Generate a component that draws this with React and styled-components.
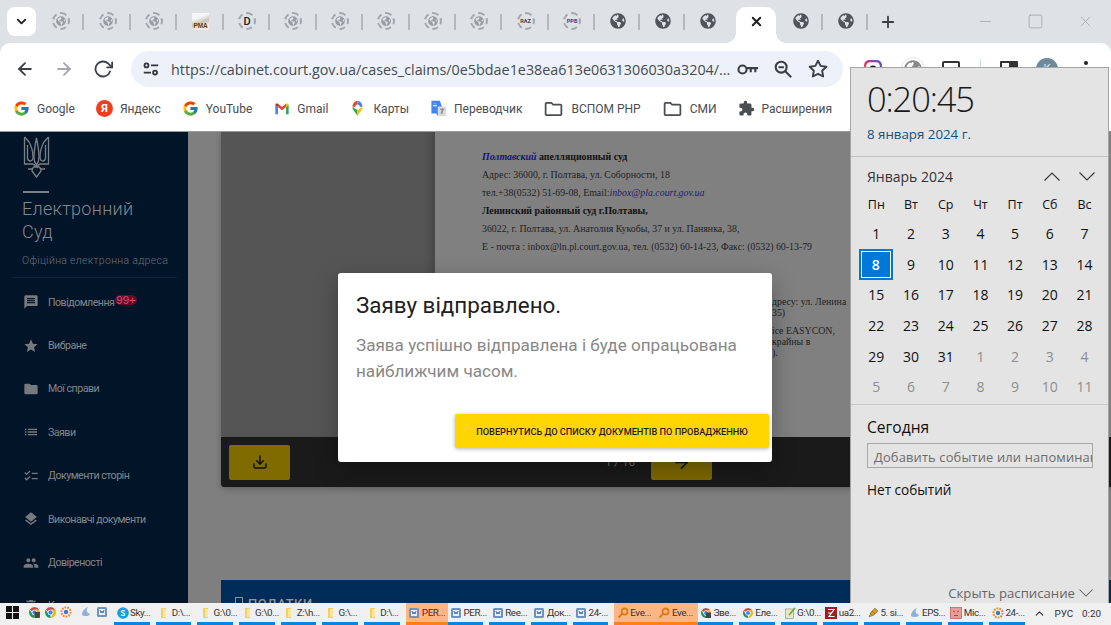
import React from "react";
import styled, { createGlobalStyle } from "styled-components";
import { FaGlobeAmericas } from "react-icons/fa";
import { FcGoogle } from "react-icons/fc";
import { MdMessage, MdStar, MdFolder, MdList, MdChecklist, MdLayers, MdPeople, MdDelete, MdExtension, MdOutlineFolder } from "react-icons/md";
import { FiArrowLeft, FiArrowRight, FiRotateCw, FiStar, FiMinus, FiPlus, FiX, FiChevronDown, FiChevronUp, FiSquare, FiDownload } from "react-icons/fi";

const Global = createGlobalStyle`
  html, body { margin: 0; padding: 0; width: 1111px; height: 625px; overflow: hidden; background: #fff; }
  * { box-sizing: border-box; }
`;

const Screen = styled.div`
  position: relative; width: 1111px; height: 625px; overflow: hidden; background: #dee1e6;
  display: flex; flex-direction: column; font-family: "Open Sans", "Liberation Sans", sans-serif;
`;

/* ---------- tab strip ---------- */
const TabStrip = styled.div`
  height: 43px; flex: none; background: #dee1e6; display: flex; align-items: stretch; padding-left: 7px;
`;
const TabMenu = styled.div`
  width: 29px; height: 29px; margin-top: 7px; margin-right: 2px; background: #fff; border-radius: 8px;
  display: flex; align-items: center; justify-content: center; color: #1f1f1f; font-size: 15px;
  svg { stroke-width: 3; }
`;
const Tab = styled.div`
  position: relative; width: ${p => p.$w || 46.45}px; display: flex; align-items: center; justify-content: center; padding-bottom: 1px; color: #52565c;
  &::after {
    content: ""; position: absolute; right: 0; top: 14px; height: 16px; width: 2px;
    background: ${p => (p.$sep ? "#b5b8bd" : "transparent")};
  }
`;
const ActiveTab = styled.div`
  position: relative; width: 40px; margin: 7px 2px 0 6px; background: #fff; border-radius: 10px 10px 0 0;
  display: flex; align-items: center; justify-content: center; padding-bottom: 7px; color: #1f1f1f; font-size: 15px;
  svg { stroke-width: 3; }
  &::before, &::after {
    content: ""; position: absolute; bottom: 0; width: 10px; height: 10px;
    background: radial-gradient(circle at var(--c) 0, #dee1e6 9.5px, #fff 10px);
  }
  &::before { left: -10px; --c: 0; }
  &::after { right: -10px; --c: 100%; }
`;
const NewTab = styled.div`
  margin-left: 3px; width: 34px; display: flex; align-items: center; justify-content: center; color: #3c4043; font-size: 18px;
  svg { stroke-width: 2.4; }
`;
const WindowControls = styled.div`
  margin-left: auto; display: flex; align-items: center; color: #a3a6ab; font-size: 17px; padding-right: 0;
`;
const WinButton = styled.div`
  width: 50px; display: flex; justify-content: center; margin-right: ${p => p.$mr || 0}px;
  svg { stroke-width: 1.2; }
`;
const DashedIcon = styled.span`
  position: relative; width: 18px; height: 18px; border-radius: 50%; border: 2px dashed #a3a7ad;
  display: flex; align-items: center; justify-content: center;
  font: ${p => p.$big ? "500 11px" : "700 5.6px"} "Roboto", sans-serif; color: ${p => p.$color || "#333"};
`;
const InnerGlobe = styled(FaGlobeAmericas)` color: #979ca2; font-size: 10px; `;
const DarkGlobe = styled(FaGlobeAmericas)` color: #50555b; font-size: 16px; `;
const PmaIcon = styled.span`
  width: 17px; height: 17px; background: linear-gradient(160deg, #f5f5f5 30%, #c9c4b8 55%, #f0ece2 75%); display: flex; align-items: flex-end; justify-content: center;
  font: 900 6.6px "Liberation Sans", sans-serif; color: #6b3f08; line-height: 8px; letter-spacing: -.2px;
`;

/* ---------- toolbar ---------- */
const Toolbar = styled.div`
  height: 45px; flex: none; background: #fff; display: flex; align-items: center; padding-top: 7px; border-radius: 10px 10px 0 0; margin-top: 0;
`;
const NavIcon = styled.div`
  width: 39px; display: flex; justify-content: center; font-size: 20px; color: ${p => p.$off ? "#a5a7aa" : "#3c3f43"};
  svg { stroke-width: 2.2; }
`;
const NavGroup = styled.div` display: flex; padding-left: 5px; width: 131px; flex: none; `;
const UrlBar = styled.div`
  width: 712px; height: 36px; flex: none; background: #edf2fa; border-radius: 18px; display: flex; align-items: center; padding: 0 8px 0 9px;
`;
const SiteChip = styled.div`
  width: 22px; height: 22px; margin-right: 9px; display: flex; align-items: center; justify-content: center; color: #33363a;
`;
const UrlText = styled.div`
  flex: 1; font-size: 14.35px; color: #474a4f; white-space: nowrap; overflow: hidden;
`;
const UrlAction = styled.div`
  width: 35px; display: flex; justify-content: center; font-size: 20px; color: #3c3f43;
  svg { stroke-width: 2.3; }
`;
const ExtTray = styled.div` display: flex; align-items: center; padding-left: 10px; `;
const ExtIcon = styled.div`
  width: ${p => p.$w || 38}px; display: flex; justify-content: center;
`;

/* ---------- bookmarks ---------- */
const Bookmarks = styled.div`
  height: 43px; flex: none; background: #fff; display: flex; align-items: center; padding-left: 13px; gap: 21px; padding-bottom: 2px;
`;
const Bookmark = styled.div`
  display: flex; align-items: center; gap: 7px; font: 400 12px "Roboto", sans-serif; color: #4a4d52; white-space: nowrap;
`;
const BookmarkGlyph = styled.span`
  width: ${p => p.$w || 17}px; height: 17px; display: flex; align-items: center; justify-content: center; font-size: ${p => p.$size || 17}px; color: #4a4d52; flex: none;
`;
const YandexDot = styled.span`
  width: 17px; height: 17px; border-radius: 50%; background: #f23d1e; color: #fff; font: 700 11px "Roboto", sans-serif;
  display: flex; align-items: center; justify-content: center;
`;

/* ---------- main ---------- */
const Main = styled.div`
  height: 472px; flex: none; display: flex; background: #7f7f7f; overflow: hidden; border-top: 1px solid #9a9a9a;
`;
const Sidebar = styled.aside`
  width: 188px; flex: none; background: #011428; display: flex; flex-direction: column; padding: 4px 0 0 23px; overflow: hidden;
`;
const Logo = styled.svg` width: 27px; height: 42px; flex: none; `;
const LogoRule = styled.div` width: 26px; height: 1.5px; background: #7c7f85; margin-top: 13px; flex: none; `;
const Brand = styled.div`
  margin: 4px 0 0 -1px; font: 300 18px/23px "Roboto", sans-serif; letter-spacing: .3px; color: #85888e; flex: none;
`;
const Tagline = styled.div`
  margin: 10px 0 0 -1px; font: 300 10.5px/16px "Roboto", sans-serif; letter-spacing: .3px; color: #6a6f76; white-space: nowrap; flex: none;
`;
const SideRule = styled.div`
  height: 1px; background: #0f2237; margin: 8px 11px 0 -11px; flex: none;
`;
const NavList = styled.nav`
  display: flex; flex-direction: column; margin-top: 3px; flex: none;
`;
const NavRow = styled.div`
  height: 43.4px; display: flex; align-items: center; gap: 9px; font: 400 10.6px "Roboto", "Liberation Sans", sans-serif; color: #85878b; white-space: nowrap; letter-spacing: -.5px; flex: none;
`;
const NavGlyph = styled.span`
  width: 16px; display: flex; justify-content: center; font-size: 18px; color: #76797e;
`;
const NavBadge = styled.span`
  position: relative; top: -2px; margin-left: -8px; padding: 0 1px; background: #620e2a; border-radius: 6px; color: #dc4a70; font: 500 11.5px/10px "Liberation Sans", sans-serif; letter-spacing: 0;
`;

const Content = styled.main`
  flex: 1; min-width: 0; display: flex; flex-direction: column; padding-left: 33px;
`;
const Viewer = styled.section`
  height: 355px; flex: none; display: flex; flex-direction: column; border-radius: 0 0 0 3px; overflow: hidden; box-shadow: 0 2px 6px rgba(0,0,0,.25);
`;
const ViewerBody = styled.div` flex: 1; min-height: 0; display: flex; `;
const Gutter = styled.div` width: 214px; flex: none; background: #555; box-shadow: inset -10px 0 10px -8px rgba(0,0,0,.25); `;
const Paper = styled.div`
  flex: 1; background: #808080; padding: 15.6px 0 0 47px; font: 400 9.85px/18px "Liberation Serif", serif; color: #222; white-space: nowrap; overflow: hidden;
`;
const DocLine = styled.div``;
const Strong = styled.b` color: #111; `;
const DocMail = styled.i` color: #23216b; `;
const DocRegion = styled.b` color: #15107f; font-style: italic; `;
const DocTail = styled.div`
  margin-left: ${p => p.$x}px; line-height: 11px; margin-top: ${p => p.$top || 0}px;
`;
const ViewerBar = styled.div`
  height: 50px; flex: none; background: #1a1a1a; display: flex; align-items: center; padding-left: 8px; position: relative;
`;
const BarButton = styled.div`
  width: 61px; height: 35px; background: #7f6b00; border-radius: 2px; display: flex; align-items: center; justify-content: center; color: #111; font-size: ${p => p.$fs || 16}px;
  margin-left: ${p => p.$ml || 0}px;
  svg { stroke-width: 2.2; }
`;
const PageNo = styled.div`
  margin-left: 315px; width: 30px; font: 400 11.5px "Roboto", sans-serif; color: #6f6f6f; white-space: nowrap;
`;
const Attachments = styled.section`
  margin-top: 93px; flex: 1; background: #002c5a; padding: 16px 0 0 14px; display: flex; gap: 5px; color: #8c95a3; font: 500 13px "Roboto", sans-serif; letter-spacing: .5px;
`;
const AttachGlyph = styled.span` width: 8px; height: 10px; margin-top: 1px; border: 1.5px solid #8c95a3; `;

/* ---------- modal ---------- */
const Modal = styled.div`
  position: absolute; left: 338px; top: 273px; width: 434px; height: 189px; background: #fff; border-radius: 3px;
  box-shadow: 0 8px 24px rgba(0,0,0,.3); display: flex; flex-direction: column; padding: 17px 3px 14px 18px; font-family: "Roboto", sans-serif;
`;
const ModalTitle = styled.h2` margin: 0; font: 400 22.4px/30px "Roboto", sans-serif; color: #212121; `;
const ModalBody = styled.p` margin: 12px 0 0; width: 400px; font: 400 17.1px/26px "Roboto", sans-serif; color: #888; `;
const ModalActions = styled.div` margin-top: auto; display: flex; justify-content: flex-end; `;
const ModalButton = styled.button`
  width: 314px; height: 34px; border: 0; border-radius: 2px; background: #ffd600; color: #1d1d1d; padding: 0;
  font: 500 9.2px "Roboto", "Liberation Sans", sans-serif; text-transform: uppercase; box-shadow: 0 1px 4px rgba(0,0,0,.3);
`;

/* ---------- calendar flyout ---------- */
const Flyout = styled.aside`
  position: absolute; left: 850px; top: 67px; width: 259px; height: 536px; background: #e4e4e4;
  border: 1px solid #a5a5a5; border-bottom: 0; display: flex; flex-direction: column; color: #111;
`;
const ClockBlock = styled.div`
  height: 89px; flex: none; padding: 8px 0 0 16px; border-bottom: 1px solid #c2c2c2;
`;
const Clock = styled.div` font: 300 34.5px/46px "Open Sans", sans-serif; color: #1a1a1a; letter-spacing: -1.15px; `;
const LongDate = styled.div` font: 400 13.3px/20px "Open Sans", sans-serif; color: #155184; margin-top: 2px; `;
const MonthSection = styled.div`
  height: 248px; flex: none; padding: 5px 0 0 8px; border-bottom: 1px solid #c9c9c9;
`;
const MonthRow = styled.div`
  height: 28px; display: flex; align-items: center; padding-left: 8px; font-size: 14px; color: #333;
`;
const MonthArrows = styled.div` margin-left: auto; display: flex; margin-right: 4px; `;
const MonthArrow = styled.span` width: 35px; display: flex; justify-content: center; `;
const Chevron = styled.svg`
  width: ${p => p.$w || 16}px; height: ${p => (p.$w || 16) / 2 + 1}px; fill: none; stroke: ${p => p.$c || "#3a3a3a"}; stroke-width: 1.2;
`;
const DayGrid = styled.div`
  display: grid; grid-template-columns: repeat(7, 34.7px); grid-template-rows: 27.4px; grid-auto-rows: 30.6px; margin-top: 1px;
`;
const DayCell = styled.div`
  display: flex; align-items: center; justify-content: center; font-size: ${p => p.$head ? 12.5 : 14}px;
  color: ${p => p.$muted ? "#8e8e8e" : "#111"};
`;
const SelectedDay = styled(DayCell)`
  margin: 0 1px 0 0; background: #0078d7; color: #fff; font-weight: 600; border: 2px solid #0078d7; box-shadow: inset 0 0 0 1px #fff;
`;
const Agenda = styled.div` flex: 1; display: flex; flex-direction: column; padding: 11px 0 0 16px; `;
const AgendaTitle = styled.div` font: 400 15.6px/22px "Open Sans", sans-serif; color: #111; `;
const AgendaInput = styled.div`
  margin-top: 5px; width: 226px; height: 25px; border: 1px solid #a8a8a8; padding-left: 6px; font-size: 12.9px; line-height: 26px;
  color: #6b6b6b; white-space: nowrap; overflow: hidden; letter-spacing: .15px;
`;
const AgendaEmpty = styled.div` margin-top: 12px; font-size: 13.6px; line-height: 20px; color: #111; `;
const HideSchedule = styled.div`
  margin-top: auto; align-self: flex-end; display: flex; align-items: center; gap: 4px; height: 20px; padding-right: 15px; font-size: 13.2px; color: #666;
`;

/* ---------- taskbar ---------- */
const Taskbar = styled.footer`
  height: 22px; flex: none; background: #f0f0f0; display: flex; align-items: stretch; font: 400 9.8px "Roboto", sans-serif; color: #333;
`;
const StartArea = styled.div` width: 114px; flex: none; display: flex; align-items: center; padding: 0 0 3px 6px; gap: 3px; `;
const TrayIcon = styled.span` width: 13px; height: 13px; margin-left: ${p => p.$ml || 0}px; display: flex; flex: none; `;
const TaskItem = styled.div`
  width: 41.7px; flex: none; display: flex; align-items: center; gap: 1.5px; padding: 0 0 3px 2.5px; overflow: hidden; white-space: nowrap; position: relative; letter-spacing: -.35px;
  background: ${p => p.$active ? "#ffb584" : "transparent"};
  &::after {
    content: ""; position: absolute; bottom: 0; left: 0; right: ${p => p.$active ? 0 : "6px"}; height: 3px; background: ${p => p.$active ? "#ff7e21" : "#0d84d8"};
  }
`;
const TaskGlyph = styled.span` width: 12px; height: 12px; flex: none; display: flex; `;
const Tray = styled.div`
  margin-left: auto; display: flex; align-items: center; padding: 0 10px 2px 0; gap: 9px; font-size: 9.8px; white-space: nowrap;
  svg { font-size: 13px; }
`;

/* ---------- drawings ---------- */
const Chrome = ({ size = 12, badge }) => (
  <svg viewBox="0 0 24 24" width={size} height={size}>
    <path fill="#db4437" d="M12 2a10 10 0 0 1 8.66 5H12a5 5 0 0 0-4.33 2.5L3.34 7A10 10 0 0 1 12 2z" />
    <path fill="#f4b400" d="M20.66 7A10 10 0 0 1 12 22l4.33-7.5A5 5 0 0 0 12 7z" />
    <path fill="#0f9d58" d="M12 22A10 10 0 0 1 3.34 7l4.33 7.5A5 5 0 0 0 12 17z" />
    <circle cx="12" cy="12" r="5" fill="#fff" />
    <circle cx="12" cy="12" r="4" fill="#4285f4" />
    {badge && <rect x="12" y="11" width="10" height="11" fill="#444" />}
  </svg>
);
const Win = () => (
  <svg viewBox="0 0 14 14" width="13" height="13"><path fill="#111" d="M0 0h6.4v6.4H0zM7.6 0H14v6.4H7.6zM0 7.6h6.4V14H0zM7.6 7.6H14V14H7.6z" /></svg>
);
const FolderT = () => (
  <svg viewBox="0 0 12 12" width="12" height="12"><path fill="#f5cf62" d="M3 1h5v10H3z" /><path fill="#fbe69c" d="M5 2h3v8H5z" /></svg>
);
const WordI = () => (
  <svg viewBox="0 0 12 12" width="12" height="12"><rect x="1" y="1" width="10" height="10" rx="1.5" fill="#6f92bf" /><rect x="3" y="3" width="6" height="6" fill="#e8eef6" /><path d="M4 4l1 3 1-2 1 2 1-3" stroke="#2b5797" fill="none" strokeWidth=".8" /></svg>
);
const KeyI = () => (
  <svg viewBox="0 0 12 12" width="12" height="12"><circle cx="7.5" cy="4.5" r="3" fill="none" stroke="#dc7a1c" strokeWidth="1.8" /><path d="M5.4 6.6L1.5 10.5" stroke="#dc7a1c" strokeWidth="2" /></svg>
);
const SkypeI = () => (
  <svg viewBox="0 0 12 12" width="12" height="12"><circle cx="6" cy="6" r="5.8" fill="#159fe2" /><path d="M8 4.2C7.4 3.4 4.4 3.3 4.3 4.6 4.2 6 8 5.6 7.9 7.4 7.8 8.8 4.6 8.6 4 7.7" stroke="#fff" fill="none" strokeWidth="1.1" /></svg>
);
const NoteI = () => (
  <svg viewBox="0 0 12 12" width="12" height="12"><rect x="1.5" y="2" width="8" height="9.5" fill="#e9e5c8" stroke="#8a8a70" strokeWidth=".6" /><path d="M5 8l6-7" stroke="#6aa52a" strokeWidth="1.6" /></svg>
);
const ZillaI = () => (
  <svg viewBox="0 0 12 12" width="12" height="12"><rect width="12" height="12" fill="#a51c1c" /><path d="M3 2.5h6L4 9.5h5.5M3 6h4" stroke="#fff" fill="none" strokeWidth="1.2" /></svg>
);
const PencilI = () => (
  <svg viewBox="0 0 12 12" width="12" height="12"><path d="M2 10l2-5 4-4 3 3-4 4z" fill="#d69a2a" stroke="#7c5a14" strokeWidth=".5" /><path d="M3 6l3 3M5 4l3 3" stroke="#7c5a14" strokeWidth=".5" /></svg>
);
const EpsI = () => (
  <svg viewBox="0 0 12 12" width="12" height="12"><path d="M2 9C2 5 5 2 8 1 6 4 6 6 10 8c0 2-6 3-8 1z" fill="#8fb1d9" /></svg>
);
const MicI = () => (
  <svg viewBox="0 0 12 12" width="12" height="12"><rect x=".5" y=".5" width="11" height="11" fill="#e79c9c" stroke="#b55" strokeWidth=".7" /><path d="M3 4l2 1m4-1L7 5M4 8.5h4" stroke="#a33" strokeWidth=".9" /></svg>
);
const GearI = () => (
  <svg viewBox="0 0 12 12" width="12" height="12"><circle cx="6" cy="6" r="4.6" fill="none" stroke="#e8893a" strokeWidth="2" strokeDasharray="1.8 1" /><circle cx="6" cy="6" r="2.2" fill="#4a78b4" /></svg>
);
const GMail = () => (
  <svg viewBox="0 0 24 24" width="16" height="16">
    <path fill="#4285f4" d="M2 20V6l4 3v11z" /><path fill="#34a853" d="M18 20V9l4-3v14z" />
    <path fill="#ea4335" d="M6 9v-5l6 5 6-5v5l-6 5z" /><path fill="#c5221f" d="M2 6c0-2 2-3 4-2v5z" /><path fill="#fbbc04" d="M22 6c0-2-2-3-4-2v5z" />
  </svg>
);
const MapPin = () => (
  <svg viewBox="0 0 24 24" width="17" height="17">
    <path fill="#34a853" d="M12 23c-1-4-7-8-7.2-13.5L12 14z" /><path fill="#fbbc04" d="M12 23c1-4 7-8 7.2-13.5L12 14z" />
    <path fill="#ea4335" d="M5 9.5C5 5 8 1.5 12 1.5V7a3 3 0 0 0-3 3z" /><path fill="#4285f4" d="M19 9.5C19 5 16 1.5 12 1.5V7a3 3 0 0 1 3 3z" />
    <circle cx="12" cy="9.5" r="3" fill="#fff" />
  </svg>
);
const Translate = () => (
  <svg viewBox="0 0 24 24" width="17" height="17">
    <path fill="#4285f4" d="M2 1h12l7 21H10l-1-3H2z" /><rect x="11" y="9" width="12" height="14" rx="1" fill="#dadce0" />
    <path d="M4 8h6M7 5v1" stroke="#fff" strokeWidth="1.5" /><path d="M14 13h6M17 12v8M15 19l4-5" stroke="#777" strokeWidth="1.2" fill="none" />
  </svg>
);
const Tune = () => (
  <svg viewBox="0 0 20 20" width="18" height="18" fill="none" stroke="#33363a" strokeWidth="2">
    <circle cx="5" cy="6" r="2.2" /><path d="M10 6h8M2 14h8" /><circle cx="14.5" cy="14" r="2.2" />
  </svg>
);
const KeyOutline = () => (
  <svg viewBox="0 0 24 12" width="22" height="11" fill="none" stroke="#3c3f43" strokeWidth="2">
    <circle cx="6" cy="6" r="4.4" /><path d="M10.5 4.5H23M15 4.5V9M20 4.5V9" />
  </svg>
);
const Zoom = () => (
  <svg viewBox="0 0 22 22" width="20" height="20" fill="none" stroke="#3c3f43" strokeWidth="2.2">
    <circle cx="9" cy="9" r="6" /><path d="M13.5 13.5L20 20M6 9h6" />
  </svg>
);
const Trident = () => (
  <Logo viewBox="0 0 27 42" fill="none" stroke="#7c7f85" strokeWidth="1.3">
    <path d="M1.5 1V28H9Q12 28 13 32" />
    <path d="M25.5 1V28H18Q15 28 14 32" />
    <path d="M1.5 1L6 6Q10 13 10 21Q10 25 7 25Q4.5 24.5 4.5 22V9" />
    <path d="M25.5 1L21 6Q17 13 17 21Q17 25 20 25Q22.5 24.5 22.5 22V9" />
    <path d="M13.5 2Q11 14 11 21Q11 26 13.5 29Q16 26 16 21Q16 14 13.5 2Z" />
    <path d="M13.5 41L9 35Q9 31 13.5 30Q18 31 18 35Z" />
    <path d="M5 33H9M18 33H22" />
  </Logo>
);
const InstaRing = () => (
  <svg viewBox="0 0 18 18" width="18" height="18"><rect x="1" y="1" width="16" height="16" rx="5" fill="none" stroke="url(#ig)" strokeWidth="2.4" /><defs><linearGradient id="ig" x1="0" y1="1" x2="1" y2="0"><stop offset="0" stopColor="#f58529" /><stop offset=".5" stopColor="#dd2a7b" /><stop offset="1" stopColor="#515bd4" /></linearGradient></defs><circle cx="9" cy="9" r="3.6" fill="#222" /></svg>
);
const ChevronDownThin = ({ w, c }) => (
  <Chevron viewBox="0 0 16 9" $w={w} $c={c}><path d="M.5.5L8 8l7.5-7.5" /></Chevron>
);
const ChevronUpThin = ({ w, c }) => (
  <Chevron viewBox="0 0 16 9" $w={w} $c={c}><path d="M.5 8.5L8 1l7.5 7.5" /></Chevron>
);
const Avatar = styled.span`
  width: 22px; height: 22px; border-radius: 50%; background: #6f8a99; color: #dfe7ea; font: 400 11px/22px "Roboto", sans-serif; text-align: center;
`;
const Dots = styled.span`
  width: 4px; height: 4px; border-radius: 50%; background: #222; box-shadow: 0 6px 0 #222, 0 -6px 0 #222;
`;
const PuzzleBox = styled.span`
  width: 18px; height: 18px; border: 2px solid #333; border-radius: 2px; margin-top: 2px;
`;
const PanelBox = styled.span`
  width: 18px; height: 16px; border: 2px solid #333; background: linear-gradient(90deg, #fff 50%, #333 50%); border-radius: 1px;
`;
const Divider = styled.span` width: 1px; height: 20px; background: #c7dcec; `;
const GlobeChip = styled.span`
  width: 24px; height: 24px; border-radius: 50%; border: 1px solid #e6e6e6; display: flex; align-items: center; justify-content: center; color: #888; font-size: 18px;
`;

/* ---------- data ---------- */
const dashed = k => <DashedIcon key={k}><InnerGlobe /></DashedIcon>;
const tabs = [
  { i: dashed(1), s: 1 }, { i: dashed(2), s: 1 }, { i: dashed(3), s: 1 },
  { i: <PmaIcon>PMA</PmaIcon>, s: 1 },
  { i: <DashedIcon $big $color="#222">D</DashedIcon>, s: 1 },
  { i: dashed(4), s: 1 }, { i: dashed(5), s: 1 }, { i: dashed(6), s: 1 }, { i: dashed(7), s: 1 }, { i: dashed(8), s: 1 },
  { i: <DashedIcon $color="#444">RAZ</DashedIcon>, s: 1 },
  { i: <DashedIcon $color="#3a3c8f">PPБ</DashedIcon>, s: 1 },
  { i: <DarkGlobe />, s: 1, w: 45 }, { i: <DarkGlobe />, s: 1, w: 45 }, { i: <DarkGlobe />, s: 0, w: 45 },
];
const bookmarks = [
  [<BookmarkGlyph><FcGoogle /></BookmarkGlyph>, "Google"],
  [<BookmarkGlyph><YandexDot>Я</YandexDot></BookmarkGlyph>, "Яндекс"],
  [<BookmarkGlyph><FcGoogle /></BookmarkGlyph>, "YouTube"],
  [<BookmarkGlyph><GMail /></BookmarkGlyph>, "Gmail"],
  [<BookmarkGlyph><MapPin /></BookmarkGlyph>, "Карты"],
  [<BookmarkGlyph><Translate /></BookmarkGlyph>, "Переводчик"],
  [<BookmarkGlyph $size={22} $w={21}><MdOutlineFolder /></BookmarkGlyph>, "ВСПОМ РНР"],
  [<BookmarkGlyph $size={22} $w={21}><MdOutlineFolder /></BookmarkGlyph>, "СМИ"],
  [<BookmarkGlyph $size={19}><MdExtension /></BookmarkGlyph>, "Расширения"],
];
const nav = [
  [MdMessage, "Повідомлення", true], [MdStar, "Вибране"], [MdFolder, "Мої справи"], [MdList, "Заяви"],
  [MdChecklist, "Документи сторін"], [MdLayers, "Виконавчі документи"], [MdPeople, "Довіреності"], [MdDelete, "Кошик"],
];
const weekDays = ["Пн", "Вт", "Ср", "Чт", "Пт", "Сб", "Вс"];
const days = [];
for (let d = 1; d <= 31; d++) days.push({ d });
for (let d = 1; d <= 11; d++) days.push({ d, muted: true });
const tasks = [
  [<SkypeI />, "Sky..."], [<FolderT />, "D:\\..."], [<FolderT />, "G:\\0..."], [<FolderT />, "G:\\0..."], [<FolderT />, "Z:\\h..."],
  [<FolderT />, "G:\\..."], [<FolderT />, "D:\\..."], [<WordI />, "PER...", true], [<WordI />, "PER..."], [<WordI />, "Ree..."],
  [<WordI />, "Док..."], [<WordI />, "24-..."], [<KeyI />, "Eve...", true], [<KeyI />, "Eve...", true], [<Chrome badge />, "Зве..."],
  [<Chrome />, "Еле..."], [<NoteI />, "G:\\0..."], [<ZillaI />, "ua2..."], [<PencilI />, "5. si..."], [<EpsI />, "EPS..."],
  [<MicI />, "Mic..."], [<GearI />, "24-..."],
];

export default function App() {
  return (
    <Screen>
      <Global />
      <TabStrip>
        <TabMenu><FiChevronDown /></TabMenu>
        {tabs.map((t, n) => <Tab key={n} $sep={!!t.s} $w={t.w}>{t.i}</Tab>)}
        <ActiveTab><FiX /></ActiveTab>
        <Tab $sep $w={45}><DarkGlobe /></Tab>
        <Tab $sep $w={45}><DarkGlobe /></Tab>
        <NewTab><FiPlus /></NewTab>
        <WindowControls>
          <WinButton><FiMinus /></WinButton>
          <WinButton><FiSquare /></WinButton>
          <WinButton $mr={1}><FiX /></WinButton>
        </WindowControls>
      </TabStrip>

      <Toolbar>
        <NavGroup>
          <NavIcon><FiArrowLeft /></NavIcon>
          <NavIcon $off><FiArrowRight /></NavIcon>
          <NavIcon><FiRotateCw /></NavIcon>
        </NavGroup>
        <UrlBar>
          <SiteChip><Tune /></SiteChip>
          <UrlText>https://cabinet.court.gov.ua/cases_claims/0e5bdae1e38ea613e0631306030a3204/...</UrlText>
          <UrlAction><KeyOutline /></UrlAction>
          <UrlAction><Zoom /></UrlAction>
          <UrlAction><FiStar /></UrlAction>
        </UrlBar>
        <ExtTray>
          <ExtIcon $w={40}><InstaRing /></ExtIcon>
          <ExtIcon $w={40}><GlobeChip><FaGlobeAmericas /></GlobeChip></ExtIcon>
          <ExtIcon $w={36}><PuzzleBox /></ExtIcon>
          <ExtIcon $w={22}><Divider /></ExtIcon>
          <ExtIcon $w={36}><PanelBox /></ExtIcon>
          <ExtIcon $w={40}><Avatar>К</Avatar></ExtIcon>
          <ExtIcon $w={38}><Dots /></ExtIcon>
        </ExtTray>
      </Toolbar>

      <Bookmarks>
        {bookmarks.map(([g, label]) => <Bookmark key={label}>{g}{label}</Bookmark>)}
      </Bookmarks>

      <Main>
        <Sidebar>
          <Trident />
          <LogoRule />
          <Brand>Електронний<br />Суд</Brand>
          <Tagline>Офіційна електронна адреса</Tagline>
          <SideRule />
          <NavList>
            {nav.map(([I, label, badge]) => (
              <NavRow key={label}>
                <NavGlyph><I /></NavGlyph>
                <span>{label}</span>
                {badge && <NavBadge>99+</NavBadge>}
              </NavRow>
            ))}
          </NavList>
        </Sidebar>
        <Content>
          <Viewer>
            <ViewerBody>
              <Gutter />
              <Paper>
                <DocLine><DocRegion>Полтавский</DocRegion> <Strong>апелляционный суд</Strong></DocLine>
                <DocLine>Адрес: 36000, г. Полтава, ул. Соборности, 18</DocLine>
                <DocLine>тел.+38(0532) 51-69-08, Email:<DocMail>inbox@pla.court.gov.ua</DocMail></DocLine>
                <DocLine><Strong>Ленинский районный суд г.Полтавы,</Strong></DocLine>
                <DocLine>36022, г. Полтава, ул. Анатолия Кукобы, 37 и ул. Панянка, 38,</DocLine>
                <DocLine>Е - почта : inbox@ln.pl.court.gov.ua, тел. (0532) 60-14-23, Факс: (0532) 60-13-79</DocLine>
                <DocTail $x={290} $top={40.4}>дресу: ул. Ленина</DocTail>
                <DocTail $x={290}>35)</DocTail>
                <DocTail $x={290} $top={7}>ice EASYCON,</DocTail>
                <DocTail $x={290}>крайны в</DocTail>
                <DocTail $x={290}>).</DocTail>
              </Paper>
            </ViewerBody>
            <ViewerBar>
              <BarButton><FiDownload /></BarButton>
              <PageNo>1 / 16</PageNo>
              <BarButton $ml={16} $fs={19}><FiArrowRight /></BarButton>
            </ViewerBar>
          </Viewer>
          <Attachments><AttachGlyph />ПОДАТКИ</Attachments>
        </Content>
      </Main>

      <Taskbar>
        <StartArea>
          <TrayIcon><Win /></TrayIcon>
          <TrayIcon $ml={6}><Chrome size={13} badge /></TrayIcon>
          <TrayIcon><Chrome size={13} /></TrayIcon>
          <TrayIcon><GearI /></TrayIcon>
          <TrayIcon $ml={4}><EpsI /></TrayIcon>
          <TrayIcon><WordI /></TrayIcon>
        </StartArea>
        {tasks.map(([g, label, active], n) => (
          <TaskItem key={n} $active={active}><TaskGlyph>{g}</TaskGlyph>{label}</TaskItem>
        ))}
        <Tray>
          <FiChevronUp />
          <span>РУС</span>
          <span>0:20</span>
        </Tray>
      </Taskbar>

      <Modal>
        <ModalTitle>Заяву відправлено.</ModalTitle>
        <ModalBody>Заява успішно відправлена і буде опрацьована найближчим часом.</ModalBody>
        <ModalActions>
          <ModalButton>Повернутись до списку документів по провадженню</ModalButton>
        </ModalActions>
      </Modal>

      <Flyout>
        <ClockBlock>
          <Clock>0:20:45</Clock>
          <LongDate>8 января 2024 г.</LongDate>
        </ClockBlock>
        <MonthSection>
          <MonthRow>
            Январь 2024
            <MonthArrows>
              <MonthArrow><ChevronUpThin /></MonthArrow>
              <MonthArrow><ChevronDownThin /></MonthArrow>
            </MonthArrows>
          </MonthRow>
          <DayGrid>
            {weekDays.map(w => <DayCell key={w} $head>{w}</DayCell>)}
            {days.map(({ d, muted }, n) =>
              !muted && d === 8
                ? <SelectedDay key={n}>{d}</SelectedDay>
                : <DayCell key={n} $muted={muted}>{d}</DayCell>
            )}
          </DayGrid>
        </MonthSection>
        <Agenda>
          <AgendaTitle>Сегодня</AgendaTitle>
          <AgendaInput>Добавить событие или напоминание</AgendaInput>
          <AgendaEmpty>Нет событий</AgendaEmpty>
          <HideSchedule>Скрыть расписание <ChevronDownThin w={14} c="#666" /></HideSchedule>
        </Agenda>
      </Flyout>
    </Screen>
  );
}
